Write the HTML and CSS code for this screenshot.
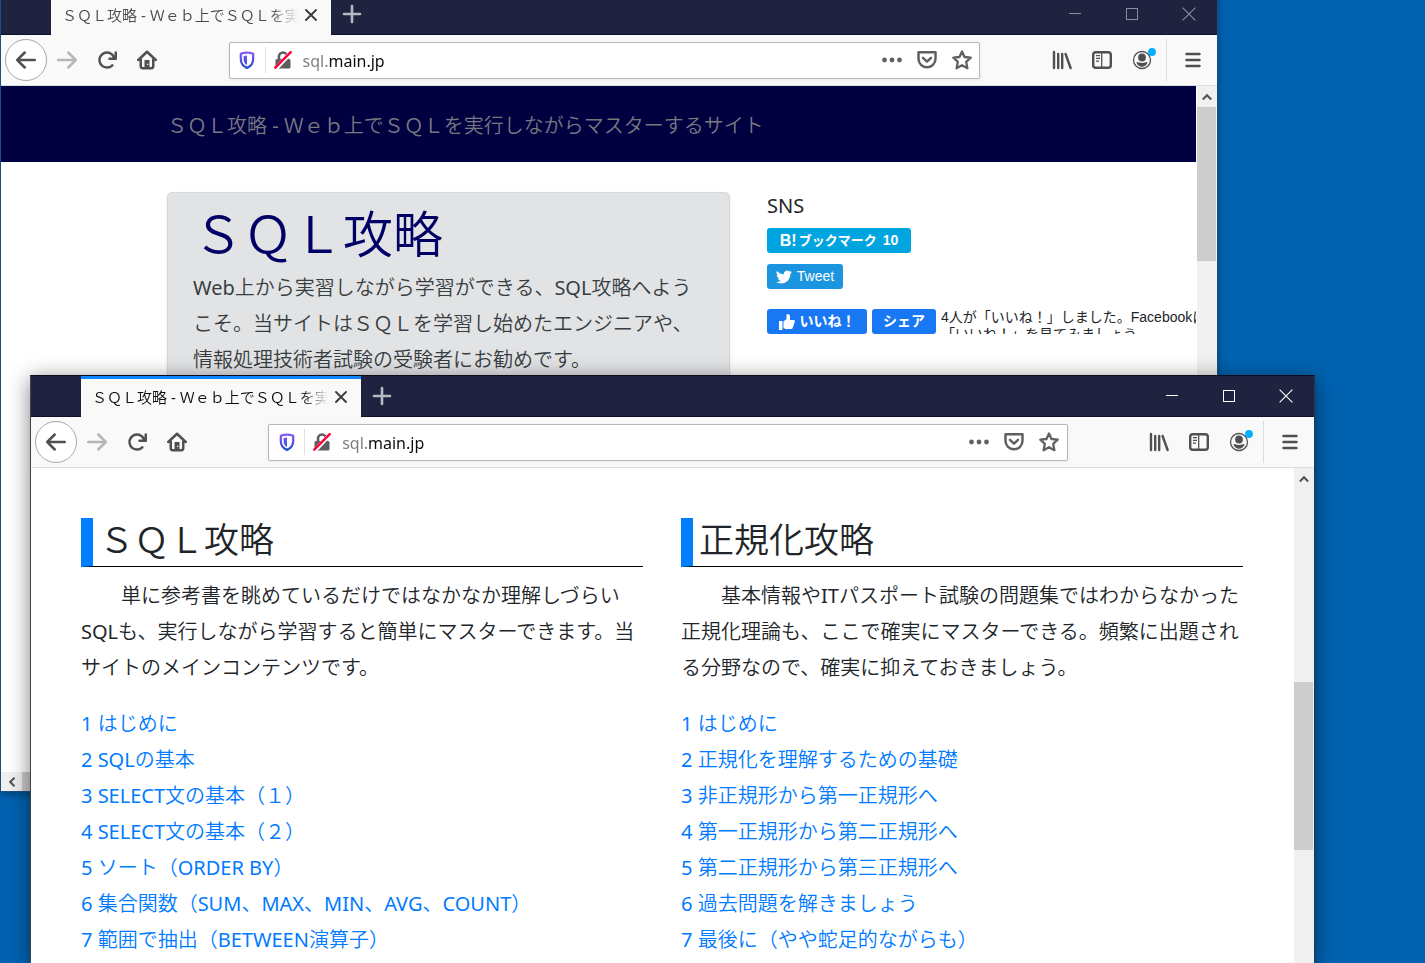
FILE: index.html
```html
<!DOCTYPE html>
<html lang="ja">
<head>
<meta charset="utf-8">
<meta name="viewport" content="width=device-width, initial-scale=1">
<title>ＳＱＬ攻略 - Ｗｅｂ上でＳＱＬを実行しながらマスターするサイト</title>
<link rel="stylesheet" href="styles.css">
</head>
<body>
<svg class="sprite" aria-hidden="true">
  <symbol id="i-back" viewBox="0 0 16 16"><path fill="currentColor" d="M15 7H3.414l4.293-4.293a1 1 0 0 0-1.414-1.414l-6 6a1 1 0 0 0 0 1.414l6 6a1 1 0 0 0 1.414-1.414L3.414 9H15a1 1 0 0 0 0-2z"/></symbol>
  <symbol id="i-forward" viewBox="0 0 16 16"><path fill="currentColor" d="M1 7h11.586L8.293 2.707a1 1 0 0 1 1.414-1.414l6 6a1 1 0 0 1 0 1.414l-6 6a1 1 0 0 1-1.414-1.414L12.586 9H1a1 1 0 0 1 0-2z"/></symbol>
  <symbol id="i-reload" viewBox="0 0 16 16"><path fill="currentColor" d="M15 1a1 1 0 0 0-1 1v2.418A6.995 6.995 0 1 0 8 15a6.954 6.954 0 0 0 4.95-2.05 1 1 0 0 0-1.414-1.414A5.019 5.019 0 1 1 12.549 6H10a1 1 0 0 0 0 2h5a1 1 0 0 0 1-1V2a1 1 0 0 0-1-1z"/></symbol>
  <symbol id="i-home" viewBox="0 0 16 16"><path fill="none" stroke="currentColor" stroke-width="2" stroke-linecap="round" stroke-linejoin="round" d="M1 8l7-6.6L15 8M3 7.5V13a1.5 1.5 0 0 0 1.5 1.5h7A1.5 1.5 0 0 0 13 13V7.5"/><path fill="currentColor" d="M6 8h4v7H6z"/><path fill="#f9f9fa" d="M8 11h1v1H8z"/></symbol>
  <symbol id="i-shield" viewBox="0 0 16 16"><path fill="none" stroke="url(#shield-fill)" stroke-width="2" stroke-linejoin="round" d="M8 1.5c2 0 4 .4 5.500 1V7c0 4-2.200 6.500-5.500 8C4.700 13.500 2.500 11 2.500 7V2.500c1.500-.6 3.500-1 5.500-1z"/><path fill="url(#shield-fill)" d="M8 4v8.500C6 11.200 5 9.500 5 7V4.500z"/></symbol>
  <linearGradient id="shield-fill" x1="0" y1="0" x2="0" y2="16" gradientUnits="userSpaceOnUse"><stop offset="0" stop-color="#9059ff"/><stop offset="1" stop-color="#1b4fc8"/></linearGradient>
  <symbol id="i-lock" viewBox="0 0 18 18"><path fill="none" stroke="#5d5d5f" stroke-width="2.600" d="M5 9V5.500a4 4 0 0 1 8 0V9"/><rect x="1.500" y="8" width="15" height="9.500" rx="1.500" fill="#5d5d5f"/><path stroke="#fff" stroke-width="4.200" d="M2 17.500L17 1.500"/><path stroke="#ff0039" stroke-width="2.400" stroke-linecap="round" d="M1.300 16.700L16.700 1.200"/></symbol>
  <symbol id="i-dots" viewBox="0 0 20 20"><g fill="currentColor"><circle cx="2.500" cy="10" r="2.400"/><circle cx="10" cy="10" r="2.400"/><circle cx="17.500" cy="10" r="2.400"/></g></symbol>
  <symbol id="i-pocket" viewBox="0 0 20 20"><path fill="none" stroke="currentColor" stroke-width="2.500" stroke-linecap="round" stroke-linejoin="round" d="M1.500 2.200h17v6.600a8.500 8.500 0 0 1-17 0zM6 7.800l4 3.800 4-3.800"/></symbol>
  <symbol id="i-star" viewBox="0 0 20 20"><path fill="none" stroke="currentColor" stroke-width="2.300" stroke-linejoin="round" d="M10 1.500l2.500 5.500 6.200.7-4.500 4.200 1.200 6.300L10 15.200l-5.400 3 1.200-6.300-4.500-4.200 6.200-.7z"/></symbol>
  <symbol id="i-library" viewBox="0 0 20 20"><path fill="none" stroke="currentColor" stroke-width="2.400" stroke-linecap="round" d="M2 2v16M6.200 4v14M10.200 4v14M13.600 4l5 14"/></symbol>
  <symbol id="i-sidebar" viewBox="0 0 20 20"><rect x="1.200" y="2.200" width="17.600" height="15.600" rx="2.600" fill="none" stroke="currentColor" stroke-width="2.400"/><path stroke="currentColor" stroke-width="1.300" d="M9.700 2v16"/><path stroke="currentColor" stroke-width="1.200" d="M4 5.700h4M4 8.400h4M4 11.100h3"/></symbol>
  <symbol id="i-account" viewBox="0 0 28 26"><circle cx="14" cy="13" r="8.500" fill="none" stroke="currentColor" stroke-width="1.300"/><circle cx="14" cy="10.500" r="3.900" fill="currentColor"/><path fill="currentColor" d="M8.500 15.200c1.500-.6 2.200.8 5.500.8s4-1.400 5.500-.8c-.6 2.800-3 4.500-5.500 4.500s-4.900-1.700-5.500-4.500z"/><circle cx="24" cy="5" r="3.900" fill="#00b0ff"/></symbol>
  <symbol id="i-menu" viewBox="0 0 20 20"><path stroke="currentColor" stroke-width="2.400" stroke-linecap="round" d="M3.500 4h13M3.500 10h13M3.500 16h13"/></symbol>
  <symbol id="i-plus" viewBox="0 0 20 20"><path stroke="currentColor" stroke-width="2.600" stroke-linecap="round" d="M10 2v16M2 10h16"/></symbol>
  <symbol id="i-tabclose" viewBox="0 0 14 14"><path stroke="currentColor" stroke-width="1.900" stroke-linecap="round" d="M2 2l10 10M12 2L2 12"/></symbol>
  <symbol id="i-min" viewBox="0 0 14 14"><path stroke="currentColor" d="M1 6.500h12"/></symbol>
  <symbol id="i-max" viewBox="0 0 14 14"><rect x="1.500" y="1.500" width="11" height="11" fill="none" stroke="currentColor"/></symbol>
  <symbol id="i-close" viewBox="0 0 14 14"><path stroke="currentColor" stroke-width="1.100" d="M.6.600l12.800 12.800M13.400.600L.600 13.400"/></symbol>
  <symbol id="i-up" viewBox="0 0 10 10"><path fill="none" stroke="currentColor" stroke-width="2" d="M.800 7.500L5 3.200l4.200 4.300"/></symbol>
  <symbol id="i-left" viewBox="0 0 10 10"><path fill="none" stroke="currentColor" stroke-width="2" d="M7.500.800L3.200 5l4.300 4.200"/></symbol>
  <symbol id="i-bird" viewBox="0 0 24 24"><path fill="currentColor" d="M23.950 4.570a10 10 0 0 1-2.820.770 4.960 4.960 0 0 0 2.160-2.720c-.950.550-2 .950-3.130 1.180a4.920 4.920 0 0 0-8.380 4.480C7.690 8.090 4.070 6.130 1.640 3.160a4.920 4.920 0 0 0 1.520 6.570 4.900 4.900 0 0 1-2.230-.620v.060a4.920 4.920 0 0 0 3.950 4.830 5 5 0 0 1-2.210.080 4.940 4.940 0 0 0 4.600 3.420A9.870 9.870 0 0 1 0 19.540a13.990 13.990 0 0 0 7.550 2.210c9.050 0 14-7.500 14-13.980 0-.210 0-.420-.020-.630a9.940 9.940 0 0 0 2.420-2.570z"/></symbol>
  <symbol id="i-thumb" viewBox="0 0 16 16"><path fill="currentColor" d="M0 7h3.500v9H0zM4.500 7.500L7.500 5V1.200C7.500.4 8 0 8.700 0 10 0 11 1.200 11 2.600V6h3.300c1 0 1.700.7 1.700 1.600 0 .7-.4 1.200-.9 1.400.3.900.1 1.700-.6 2.200.2.800 0 1.500-.7 1.900.2 1.300-.5 1.900-1.600 1.900H7.500c-1.200 0-2-.5-3-1z"/></symbol>
</svg>

<main class="desktop">
  <section class="window window--rear" aria-label="ＳＱＬ攻略 トップ">
    <div class="titlebar">
      <div class="tab"><span class="tab__label">ＳＱＬ攻略 - Ｗｅｂ上でＳＱＬを実</span><button class="tab__close" aria-label="タブを閉じる"><svg><use href="#i-tabclose"/></svg></button></div>
      <button class="newtab" aria-label="新しいタブ"><svg><use href="#i-plus"/></svg></button>
      <div class="controls">
        <button aria-label="最小化"><svg><use href="#i-min"/></svg></button>
        <button aria-label="最大化"><svg><use href="#i-max"/></svg></button>
        <button aria-label="閉じる"><svg><use href="#i-close"/></svg></button>
      </div>
    </div>
    <div class="toolbar">
      <button class="back" aria-label="戻る"><svg><use href="#i-back"/></svg></button>
      <button class="tool tool--off" aria-label="進む"><svg><use href="#i-forward"/></svg></button>
      <button class="tool" aria-label="再読み込み"><svg><use href="#i-reload"/></svg></button>
      <button class="tool" aria-label="ホーム"><svg><use href="#i-home"/></svg></button>
      <span class="spring"></span>
      <div class="urlbar">
        <button class="shield" aria-label="保護"><svg><use href="#i-shield"/></svg></button>
        <button class="lock" aria-label="接続情報"><svg><use href="#i-lock"/></svg></button>
        <input class="address" type="text" value="sql.main.jp" aria-label="アドレス">
        <button class="action" aria-label="ページ操作"><svg><use href="#i-dots"/></svg></button>
        <button class="action" aria-label="Pocket"><svg><use href="#i-pocket"/></svg></button>
        <button class="action" aria-label="ブックマーク"><svg><use href="#i-star"/></svg></button>
      </div>
      <span class="spring"></span>
      <button class="tool" aria-label="ライブラリー"><svg><use href="#i-library"/></svg></button>
      <button class="tool" aria-label="サイドバー"><svg><use href="#i-sidebar"/></svg></button>
      <button class="tool tool--account" aria-label="アカウント"><svg><use href="#i-account"/></svg></button>
      <button class="menu" aria-label="メニュー"><svg><use href="#i-menu"/></svg></button>
    </div>
    <div class="viewport">
      <div class="page page--top">
        <header class="site-header">ＳＱＬ攻略 - Ｗｅｂ上でＳＱＬを実行しながらマスターするサイト</header>
        <div class="intro">
          <article class="card">
            <h1>ＳＱＬ攻略</h1>
            <p>Web上から実習しながら学習ができる、SQL攻略へようこそ。当サイトはＳＱＬを学習し始めたエンジニアや、情報処理技術者試験の受験者にお勧めです。</p>
          </article>
          <aside class="sns">
            <h2>SNS</h2>
            <a class="btn btn--hatena" href="#"><b class="hatena-mark">B!</b>ブックマーク<span class="count">10</span></a>
            <a class="btn btn--tweet" href="#"><svg><use href="#i-bird"/></svg>Tweet</a>
            <div class="facebook">
              <button class="btn btn--like"><svg><use href="#i-thumb"/></svg>いいね！</button>
              <button class="btn btn--share">シェア</button>
              <p>4人が「いいね！」しました。Facebookに<br>「いいね！」を見てみましょう</p>
            </div>
          </aside>
        </div>
      </div>
      <div class="vscroll"><button aria-label="上へ"><svg><use href="#i-up"/></svg></button><span class="thumb thumb--rear"></span></div>
    </div>
    <div class="hscroll"><button aria-label="左へ"><svg><use href="#i-left"/></svg></button><span class="thumb"></span></div>
  </section>

  <section class="window window--front" aria-label="ＳＱＬ攻略 目次">
    <div class="titlebar">
      <div class="tab"><span class="tab__label">ＳＱＬ攻略 - Ｗｅｂ上でＳＱＬを実</span><button class="tab__close" aria-label="タブを閉じる"><svg><use href="#i-tabclose"/></svg></button></div>
      <button class="newtab" aria-label="新しいタブ"><svg><use href="#i-plus"/></svg></button>
      <div class="controls">
        <button aria-label="最小化"><svg><use href="#i-min"/></svg></button>
        <button aria-label="最大化"><svg><use href="#i-max"/></svg></button>
        <button aria-label="閉じる"><svg><use href="#i-close"/></svg></button>
      </div>
    </div>
    <div class="toolbar">
      <button class="back" aria-label="戻る"><svg><use href="#i-back"/></svg></button>
      <button class="tool tool--off" aria-label="進む"><svg><use href="#i-forward"/></svg></button>
      <button class="tool" aria-label="再読み込み"><svg><use href="#i-reload"/></svg></button>
      <button class="tool" aria-label="ホーム"><svg><use href="#i-home"/></svg></button>
      <span class="spring"></span>
      <div class="urlbar">
        <button class="shield" aria-label="保護"><svg><use href="#i-shield"/></svg></button>
        <button class="lock" aria-label="接続情報"><svg><use href="#i-lock"/></svg></button>
        <input class="address" type="text" value="sql.main.jp" aria-label="アドレス">
        <button class="action" aria-label="ページ操作"><svg><use href="#i-dots"/></svg></button>
        <button class="action" aria-label="Pocket"><svg><use href="#i-pocket"/></svg></button>
        <button class="action" aria-label="ブックマーク"><svg><use href="#i-star"/></svg></button>
      </div>
      <span class="spring"></span>
      <button class="tool" aria-label="ライブラリー"><svg><use href="#i-library"/></svg></button>
      <button class="tool" aria-label="サイドバー"><svg><use href="#i-sidebar"/></svg></button>
      <button class="tool tool--account" aria-label="アカウント"><svg><use href="#i-account"/></svg></button>
      <button class="menu" aria-label="メニュー"><svg><use href="#i-menu"/></svg></button>
    </div>
    <div class="viewport">
      <div class="page contents">
        <section class="course">
          <h2>ＳＱＬ攻略</h2>
          <p>単に参考書を眺めているだけではなかなか理解しづらいSQLも、実行しながら学習すると簡単にマスターできます。当サイトのメインコンテンツです。</p>
          <ul>
            <li><a href="#">1 はじめに</a></li>
            <li><a href="#">2 SQLの基本</a></li>
            <li><a href="#">3 SELECT文の基本（１）</a></li>
            <li><a href="#">4 SELECT文の基本（２）</a></li>
            <li><a href="#">5 ソート（ORDER BY）</a></li>
            <li><a href="#">6 集合関数（SUM、MAX、MIN、AVG、COUNT）</a></li>
            <li><a href="#">7 範囲で抽出（BETWEEN演算子）</a></li>
          </ul>
        </section>
        <section class="course">
          <h2>正規化攻略</h2>
          <p>基本情報やITパスポート試験の問題集ではわからなかった正規化理論も、ここで確実にマスターできる。頻繁に出題される分野なので、確実に抑えておきましょう。</p>
          <ul>
            <li><a href="#">1 はじめに</a></li>
            <li><a href="#">2 正規化を理解するための基礎</a></li>
            <li><a href="#">3 非正規形から第一正規形へ</a></li>
            <li><a href="#">4 第一正規形から第二正規形へ</a></li>
            <li><a href="#">5 第二正規形から第三正規形へ</a></li>
            <li><a href="#">6 過去問題を解きましょう</a></li>
            <li><a href="#">7 最後に（やや蛇足的ながらも）</a></li>
          </ul>
        </section>
      </div>
      <div class="vscroll"><button aria-label="上へ"><svg><use href="#i-up"/></svg></button><span class="thumb thumb--front"></span></div>
    </div>
  </section>
</main>
</body>
</html>
```

FILE: styles.css
```css
* { box-sizing: border-box; }

body {
  margin: 0;
  font-family: "Noto Sans", "Noto Sans CJK JP DemiLight", "Noto Sans CJK JP", sans-serif;
  font-size: 20px;
  line-height: 36px;
  font-weight: 400;
  color: #212529;
  text-spacing-trim: space-all;
}

h1, h2, p, ul { margin: 0; padding: 0; font-weight: inherit; }
ul { list-style: none; }
a { text-decoration: none; }

button {
  display: flex;
  align-items: center;
  justify-content: center;
  flex: none;
  margin: 0;
  padding: 0;
  border: 0;
  background: none;
  color: inherit;
  font: inherit;
}

svg { display: block; flex: none; width: 20px; height: 20px; }
.sprite { position: absolute; width: 0; height: 0; }

.desktop {
  position: relative;
  height: 100vh;
  overflow: hidden;
  background: #0063b1;
}

/* Windows */
.window {
  position: absolute;
  display: flex;
  flex-direction: column;
  border: 1px solid #1a4f80;
  background: #fff;
}
.window--rear {
  inset: -7px 207px 171px 0;
  box-shadow: 0 2px 8px rgba(0, 0, 0, .35);
}
.window--front {
  inset: 375px 110px 0 30px;
  border-color: #0c0c1a #1c3a58 #1c3a58 #444;
  border-bottom: 0;
  box-shadow: 0 4px 20px rgba(0, 0, 0, .5);
}

.titlebar {
  display: flex;
  flex: none;
  height: 41px;
  padding-left: 50px;
  background: linear-gradient(#202340 40px, #0f1024 40px);
  color: #8d8e9c;
}
.window--front .titlebar { color: #fff; }

.tab {
  display: flex;
  align-items: center;
  width: 280px;
  padding: 0 10px 2px 11px;
  border-top: 3px solid #f9f9fa;
  background: #f9f9fa;
  color: #4a4a4f;
}
.window--front .tab { border-top-color: #0a84ff; color: #0c0c0d; }
.tab__label {
  flex: 1;
  white-space: nowrap;
  font-size: 15px;
  line-height: 20px;
  mask-image: linear-gradient(90deg, #000 210px, transparent 236px);
}
.tab__close { width: 22px; height: 22px; color: #3c3c40; }
.tab__close svg { width: 14px; height: 14px; }
.newtab { width: 42px; padding-bottom: 2px; color: #b8b9c2; }
.controls { display: flex; margin-left: auto; }
.controls button { width: 57px; padding-bottom: 2px; }
.controls svg { width: 14px; height: 14px; }

/* Navigation toolbar */
.toolbar {
  display: flex;
  align-items: center;
  flex: none;
  height: 51px;
  padding-left: 4px;
  border-bottom: 1px solid #dfdfe1;
  background: #f9f9fa;
  color: #505053;
}
.back {
  width: 42px;
  height: 42px;
  border: 1px solid #a9a9ab;
  border-radius: 50%;
  background: #fff;
}
.tool { width: 40px; height: 42px; }
.tool--off { color: #b6b6b8; }
.tool--account { margin-right: 4px; }
.tool--account svg { width: 28px; height: 26px; }
.spring { flex: 1 1 0; }
.menu { width: 51px; height: 42px; padding-left: 2px; border-left: 1px solid #dcdcde; }

.urlbar {
  display: flex;
  align-items: center;
  flex: 5 1 444px;
  min-width: 0;
  height: 37px;
  border: 1px solid #b6b6b8;
  border-radius: 2px;
  background: #fff;
  box-shadow: 0 1px 4px rgba(0, 0, 0, .06);
}
.shield { width: 36px; height: 26px; border-right: 1px solid #e0e0e2; }
.shield svg, .lock svg { width: 18px; height: 18px; }
.lock { width: 37px; height: 26px; padding-right: 3px; }
.address {
  flex: 1;
  min-width: 0;
  padding: 2px 0 0;
  border: 0;
  outline: 0;
  background: linear-gradient(90deg, #7a7a7d 26px, #0c0c0d 26px);
  background-clip: text;
  color: transparent;
  font: 16px/24px "Noto Sans", sans-serif;
}
.action { width: 35px; height: 35px; color: #606063; }

/* Page area and scroll bars */
.viewport { display: flex; flex: 1; min-height: 0; }
.page { flex: 1; min-width: 0; overflow: hidden; }
.page--top { margin-right: 1px; }
.vscroll { flex: none; width: 20px; padding-right: 1px; background: #f0f0f0; color: #505050; }
.vscroll button { width: 19px; height: 21px; }
.vscroll svg, .hscroll svg { width: 10px; height: 10px; }
.thumb { display: block; background: #cdcdcd; }
.thumb--rear { height: 154px; }
.thumb--front { height: 168px; margin-top: 193px; }
.hscroll { display: flex; flex: none; height: 19px; background: #f0f0f0; color: #505050; }
.hscroll button { width: 21px; }
.hscroll .thumb { width: 70%; }

/* Top page */
.site-header {
  padding: 22px 0 18px 166px;
  background: #000040;
  color: #777981;
  white-space: nowrap;
}
.intro {
  display: grid;
  grid-template-columns: minmax(0, 563fr) minmax(0, 429fr);
  gap: 37px;
  padding: 30px 0 0 166px;
}
.card {
  padding: 11px 25px 25px;
  border: 1px solid #d6d8db;
  border-radius: 5px;
  background: #e2e3e5;
  box-shadow: 0 1px 3px rgba(0, 0, 0, .1);
  color: #383d41;
}
.card h1 { margin-bottom: 6px; font-size: 50px; line-height: 60px; color: #006; }

.sns h2 { margin-bottom: 8px; font-size: 20px; line-height: 28px; }
.btn {
  display: flex;
  align-items: center;
  justify-content: center;
  gap: 5px;
  height: 25px;
  border-radius: 3px;
  color: #fff;
  font: bold 14px/25px "Liberation Sans", "Noto Sans CJK JP", sans-serif;
}
.btn svg { width: 16px; height: 16px; }
.btn--hatena { width: 144px; margin-bottom: 11px; gap: 2px; background: #00a4de; font-size: 13px; }
.hatena-mark { font-size: 16px; }
.count { margin-left: 4px; font-size: 14px; }
.btn--tweet { width: 76px; margin-bottom: 20px; background: #1b95e0; font-weight: 400; }
.facebook { display: flex; gap: 5px; height: 25px; overflow: hidden; }
.btn--like { width: 100px; background: #1877f2; }
.btn--share { width: 64px; background: #1877f2; }
.facebook p {
  flex: 1;
  white-space: nowrap;
  font: 14px/17px "Liberation Sans", "Noto Sans CJK JP", sans-serif;
}

/* Contents page */
.contents {
  display: grid;
  grid-template-columns: 1fr 1fr;
  gap: 38px;
  padding: 50px 51px 0 50px;
}
.course h2 {
  margin-bottom: 11px;
  padding: 0 0 4px 6px;
  border-left: 12px solid #0080ff;
  border-bottom: 1px solid #000;
  font-size: 35px;
  line-height: 44px;
}
.course p { margin-bottom: 20px; text-indent: 2em; }
.course a { color: #007bff; }
```
